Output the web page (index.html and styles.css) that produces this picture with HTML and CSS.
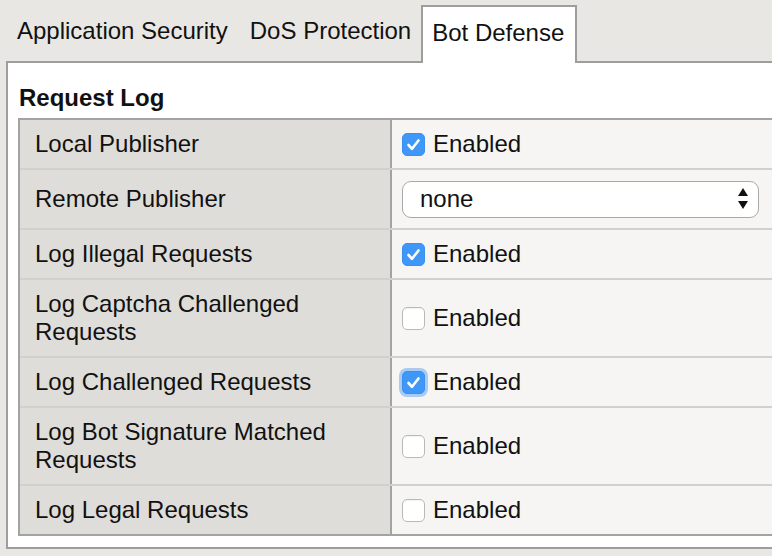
FILE: index.html
```html
<!DOCTYPE html>
<html>
<head>
<meta charset="utf-8">
<link rel="stylesheet" href="styles.css">
</head>
<body>
<div class="tabs">
  <div class="tab tab-first">Application Security</div>
  <div class="tab tab-second">DoS Protection</div>
  <div class="tab tab-active">Bot Defense</div>
</div>
<div class="panel">
  <h2 class="heading">Request Log</h2>
  <div class="grid">
    <div class="row">
      <div class="label">Local Publisher</div>
      <div class="value"><span class="cb checked"><svg viewBox="0 0 23 23" width="23" height="23"><path d="M6.5 12 L10 15.8 L16.5 7.5" fill="none" stroke="#fff" stroke-width="2.6" stroke-linecap="round" stroke-linejoin="round"/></svg></span><span class="cb-text">Enabled</span></div>
    </div>
    <div class="row">
      <div class="label">Remote Publisher</div>
      <div class="value">
        <div class="select"><span class="select-text">none</span>
          <svg class="arrows" viewBox="0 0 12 22" width="12" height="22"><path d="M6 0 L11 8 L1 8 Z" fill="#111"/><path d="M1 13 L11 13 L6 21 Z" fill="#111"/></svg>
        </div>
      </div>
    </div>
    <div class="row">
      <div class="label">Log Illegal Requests</div>
      <div class="value"><span class="cb checked"><svg viewBox="0 0 23 23" width="23" height="23"><path d="M6.5 12 L10 15.8 L16.5 7.5" fill="none" stroke="#fff" stroke-width="2.6" stroke-linecap="round" stroke-linejoin="round"/></svg></span><span class="cb-text">Enabled</span></div>
    </div>
    <div class="row">
      <div class="label">Log Captcha Challenged Requests</div>
      <div class="value"><span class="cb"></span><span class="cb-text">Enabled</span></div>
    </div>
    <div class="row">
      <div class="label">Log Challenged Requests</div>
      <div class="value"><span class="cb checked focused"><svg viewBox="0 0 23 23" width="23" height="23"><path d="M6.5 12 L10 15.8 L16.5 7.5" fill="none" stroke="#fff" stroke-width="2.6" stroke-linecap="round" stroke-linejoin="round"/></svg></span><span class="cb-text">Enabled</span></div>
    </div>
    <div class="row">
      <div class="label">Log Bot Signature Matched Requests</div>
      <div class="value"><span class="cb"></span><span class="cb-text">Enabled</span></div>
    </div>
    <div class="row row-last">
      <div class="label">Log Legal Requests</div>
      <div class="value"><span class="cb"></span><span class="cb-text">Enabled</span></div>
    </div>
  </div>
</div>
</body>
</html>
```
FILE: styles.css
```css
html, body {
  margin: 0;
  padding: 0;
}
body {
  width: 772px;
  height: 556px;
  overflow: hidden;
  background: #e9e7e4;
  font-family: "Liberation Sans", Arial, Helvetica, sans-serif;
  font-size: 24px;
  line-height: 28px;
  color: #111;
}
.tabs {
  display: flex;
  align-items: flex-start;
  padding: 5px 0 0 6px;
  height: 61px;
  box-sizing: border-box;
}
.tab {
  padding: 12px 11px 0 11px;
  white-space: nowrap;
}
.tab-second {
  padding-right: 10px;
}
.tab-active {
  position: relative;
  z-index: 1;
  background: #fff;
  border: 2px solid #9d9d9d;
  border-bottom: none;
  padding: 12px 11px 16px 9px;
}
.panel {
  position: relative;
  margin-left: 6px;
  width: 820px;
  background: #fff;
  border: 2px solid #9d9d9d;
  padding: 21px 0 11px 10px;
  box-sizing: border-box;
}
.heading {
  margin: 0 0 6px 0;
  font-size: 24px;
  line-height: 28px;
  font-weight: bold;
  padding-left: 1px;
}
.grid {
  width: 763px;
  border: 2px solid #a3a3a3;
  border-right: none;
}
.row {
  display: grid;
  grid-template-columns: 372px 1fr;
  border-bottom: 2px solid #d2d0cd;
}
.row-last {
  border-bottom: none;
}
.label {
  background: #dfddda;
  border-right: 2px solid #a3a3a3;
  padding: 10px 15px;
  display: flex;
  align-items: center;
}
.value {
  background: #f6f5f3;
  padding: 10px 10px;
  display: flex;
  align-items: center;
}
.cb {
  width: 23px;
  height: 23px;
  box-sizing: border-box;
  border-radius: 5px;
  background: #fff;
  border: 1px solid #b9b9b9;
  box-shadow: inset 0 1px 1px rgba(0,0,0,0.06);
  flex: none;
  display: flex;
}
.cb.checked {
  background: #3f98f7;
  border: 1px solid #3a90ee;
  box-shadow: none;
}
.cb svg {
  margin: -1px;
}
.cb.focused {
  box-shadow: 0 0 0 3px rgba(110, 165, 240, 0.55);
}
.cb-text {
  margin-left: 8px;
}
.select {
  width: 357px;
  height: 37px;
  box-sizing: border-box;
  border: 1.5px solid #a9a9a9;
  border-radius: 9px;
  background: #fff;
  display: flex;
  align-items: center;
  justify-content: space-between;
  padding: 0 9px 0 17px;
  margin: 0.5px 0;
}
.arrows {
  display: block;
}
```
